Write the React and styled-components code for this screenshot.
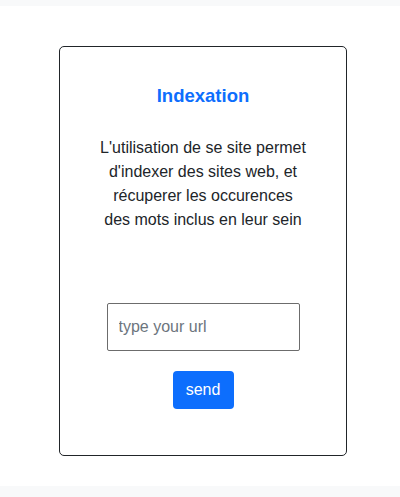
import React from "react";
import styled, { createGlobalStyle } from "styled-components";

const Global = createGlobalStyle`
  html, body { margin: 0; padding: 0; background: #fff; }
  body { font-family: "Liberation Sans", Arial, sans-serif; color: #212529; }
  * { box-sizing: border-box; }
`;

const TopBar = styled.div`
  height: 6px;
  background: #f8f9fa;
`;

const Main = styled.main`
  display: flex;
  justify-content: center;
  padding: 40px 0 30px 6px;
`;

const Card = styled.section`
  width: 288px;
  border: 1px solid #212529;
  border-radius: 5px;
  padding: 38px 20px 46px;
  display: flex;
  flex-direction: column;
  align-items: center;
  text-align: center;
`;

const Title = styled.h1`
  margin: 0;
  font-size: 18.5px;
  line-height: 22px;
  font-weight: 700;
  color: #0d6efd;
`;

const Text = styled.p`
  margin: 29px 0 0;
  font-size: 16px;
  line-height: 24px;
  color: #212529;
`;

const Form = styled.form`
  margin-top: 71px;
  display: flex;
  flex-direction: column;
  align-items: center;
  gap: 20px;
`;

const UrlInput = styled.input`
  width: 193px;
  height: 48px;
  border: 1px solid #6c6c6c;
  border-radius: 2px;
  padding: 0 11px;
  font-family: "Liberation Sans", Arial, sans-serif;
  font-size: 16px;
  color: #212529;
  outline: none;
  &::placeholder { color: #6c757d; }
`;

const SendButton = styled.button`
  width: 61px;
  height: 38px;
  border: none;
  border-radius: 4px;
  background: #0d6efd;
  color: #fff;
  font-family: "Liberation Sans", Arial, sans-serif;
  font-size: 16px;
  cursor: pointer;
`;

const BottomBar = styled.div`
  height: 11px;
  background: #f8f9fa;
`;

export default function App() {
  return (
    <>
      <Global />
      <TopBar />
      <Main>
        <Card>
          <Title>Indexation</Title>
          <Text>
            L'utilisation de se site permet
            <br />
            d'indexer des sites web, et
            <br />
            récuperer les occurences
            <br />
            des mots inclus en leur sein
          </Text>
          <Form onSubmit={(e) => e.preventDefault()}>
            <UrlInput type="text" placeholder="type your url" />
            <SendButton type="submit">send</SendButton>
          </Form>
        </Card>
      </Main>
      <BottomBar />
    </>
  );
}
